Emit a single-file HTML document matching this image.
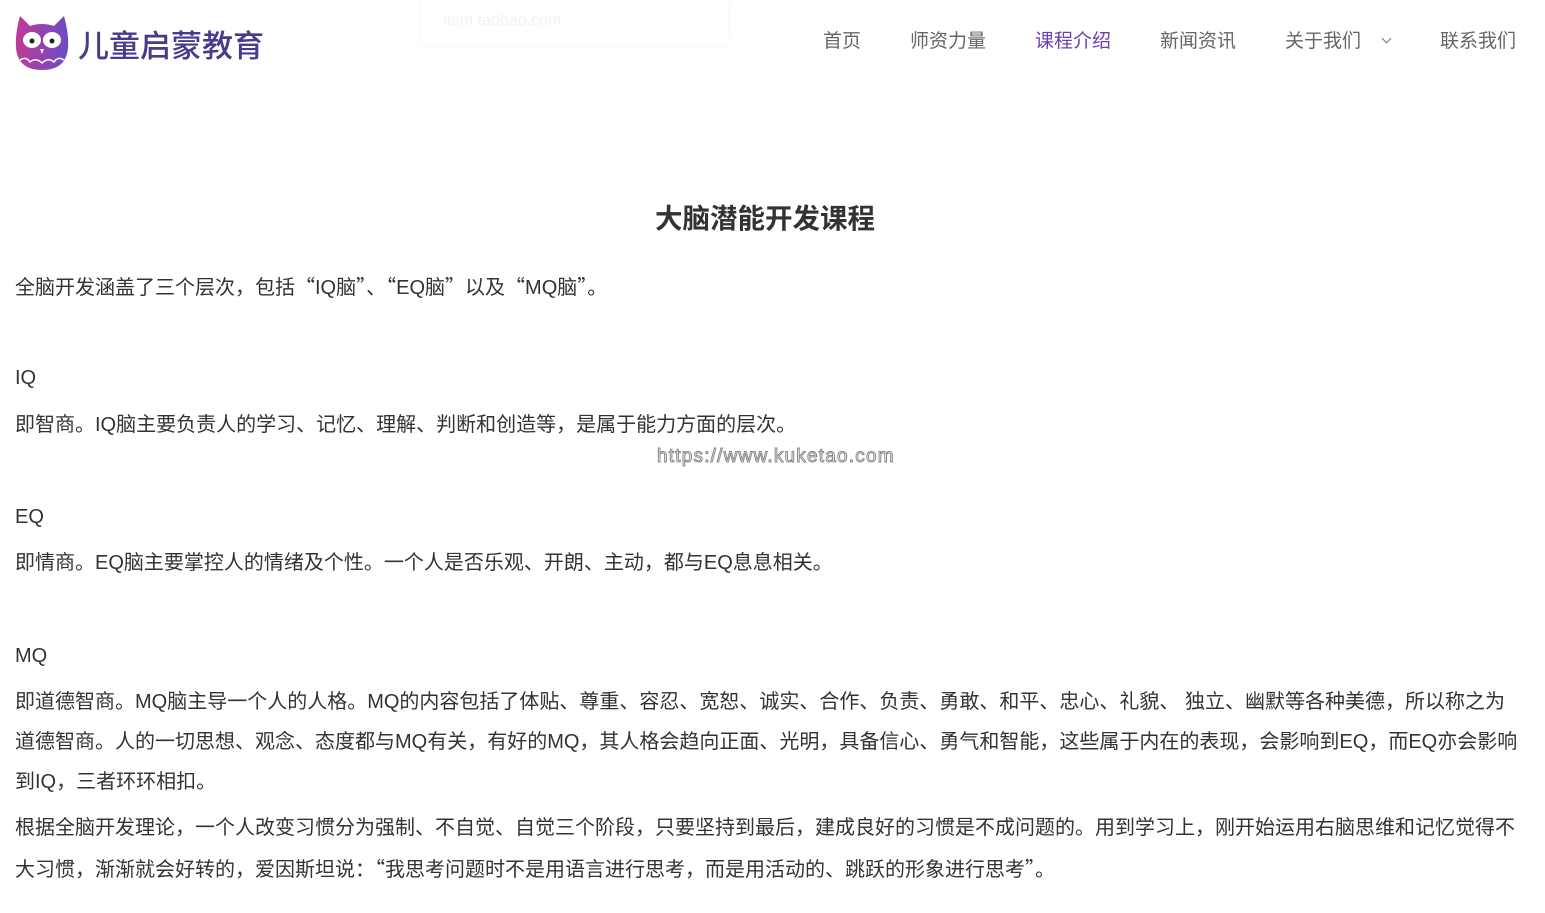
<!DOCTYPE html>
<html><head><meta charset="utf-8">
<style>
*{margin:0;padding:0;box-sizing:border-box}
body{width:1545px;height:913px;background:#fff;font-family:"Liberation Sans","Noto Sans CJK SC",sans-serif;color:#333;position:relative;overflow:hidden}
.logo{position:absolute;left:14px;top:14px;display:flex;align-items:center}
.logo span{font-size:31px;color:#4a3a8c;margin-left:8px;font-weight:500}
.pop{position:absolute;left:421px;top:-10px;width:307px;height:55px;border-radius:6px;box-shadow:0 1px 6px rgba(0,0,0,0.04);background:#fff}
.pop div{position:absolute;left:22px;top:22px;font-size:16px;color:#f2f2f2}
nav{position:absolute;top:26px;font-size:19px;color:#666}
nav a{position:absolute;white-space:nowrap}
h1{position:absolute;left:0;width:1530px;top:196px;text-align:center;font-size:27.5px;font-weight:bold;color:#333}
p{position:absolute;left:15px;font-size:20px;line-height:40px;width:1505px}
q{quotes:none;font-family:"Noto Sans CJK SC",sans-serif}
.wm{position:absolute;left:657px;top:446px;font-size:19px;color:#fff;-webkit-text-stroke:1px #888;letter-spacing:1.2px}
</style></head><body>
<div class="pop"><div>item.taobao.com</div></div>
<div class="logo">
<svg width="56" height="58" viewBox="0 0 56 58"><defs><linearGradient id="g" x1="0" x2="1"><stop offset="0" stop-color="#c03a96"/><stop offset="1" stop-color="#6a4cc6"/></linearGradient></defs>
<path d="M6 2 L16 12 Q28 8 40 12 L50 2 Q55 20 54 34 Q52 56 28 56 Q4 56 2 34 Q1 20 6 2Z" fill="url(#g)"/>
<ellipse cx="18" cy="26" rx="9" ry="8" fill="#fff"/><ellipse cx="38" cy="26" rx="9" ry="8" fill="#fff"/>
<circle cx="18" cy="27" r="2.5" fill="#222"/><circle cx="38" cy="27" r="2.5" fill="#222"/>
<path d="M26 35 L28 40 L30 35Z" fill="#fff"/>
<path d="M6 46 Q12 42 16 48 Q22 43 28 49 Q34 43 40 48 Q44 42 50 46" stroke="#fff" stroke-width="1.5" fill="none"/></svg>
<span>儿童启蒙教育</span></div>
<nav>
<a style="left:823px">首页</a>
<a style="left:910px">师资力量</a>
<a style="left:1035px;color:#6a3fb0">课程介绍</a>
<a style="left:1160px">新闻资讯</a>
<a style="left:1285px">关于我们<span style="display:inline-block;width:7px;height:7px;border-right:1.5px solid #777;border-bottom:1.5px solid #777;transform:rotate(45deg);margin-left:22px;position:relative;top:-5px"></span></a>
<a style="left:1440px">联系我们</a>
</nav>
<h1>大脑潜能开发课程</h1>
<p style="top:266px">全脑开发涵盖了三个层次，包括<q>“</q>IQ脑<q>”</q>、<q>“</q>EQ脑<q>”</q>以及<q>“</q>MQ脑<q>”</q>。</p>
<p style="top:358px">IQ</p>
<p style="top:405px">即智商。IQ脑主要负责人的学习、记忆、理解、判断和创造等，是属于能力方面的层次。</p>
<div class="wm">https://www.kuketao.com</div>
<p style="top:497px">EQ</p>
<p style="top:543px">即情商。EQ脑主要掌控人的情绪及个性。一个人是否乐观、开朗、主动，都与EQ息息相关。</p>
<p style="top:636px">MQ</p>
<p style="top:682px">即道德智商。MQ脑主导一个人的人格。MQ的内容包括了体贴、尊重、容忍、宽恕、诚实、合作、负责、勇敢、和平、忠心、礼貌、 独立、幽默等各种美德，所以称之为道德智商。人的一切思想、观念、态度都与MQ有关，有好的MQ，其人格会趋向正面、光明，具备信心、勇气和智能，这些属于内在的表现，会影响到EQ，而EQ亦会影响到IQ，三者环环相扣。</p>
<p style="top:808px">根据全脑开发理论，一个人改变习惯分为强制、不自觉、自觉三个阶段，只要坚持到最后，建成良好的习惯是不成问题的。用到学习上，刚开始运用右脑思维和记忆觉得不大习惯，渐渐就会好转的，爱因斯坦说：<q>“</q>我思考问题时不是用语言进行思考，而是用活动的、跳跃的形象进行思考<q>”</q>。</p>
</body></html>
